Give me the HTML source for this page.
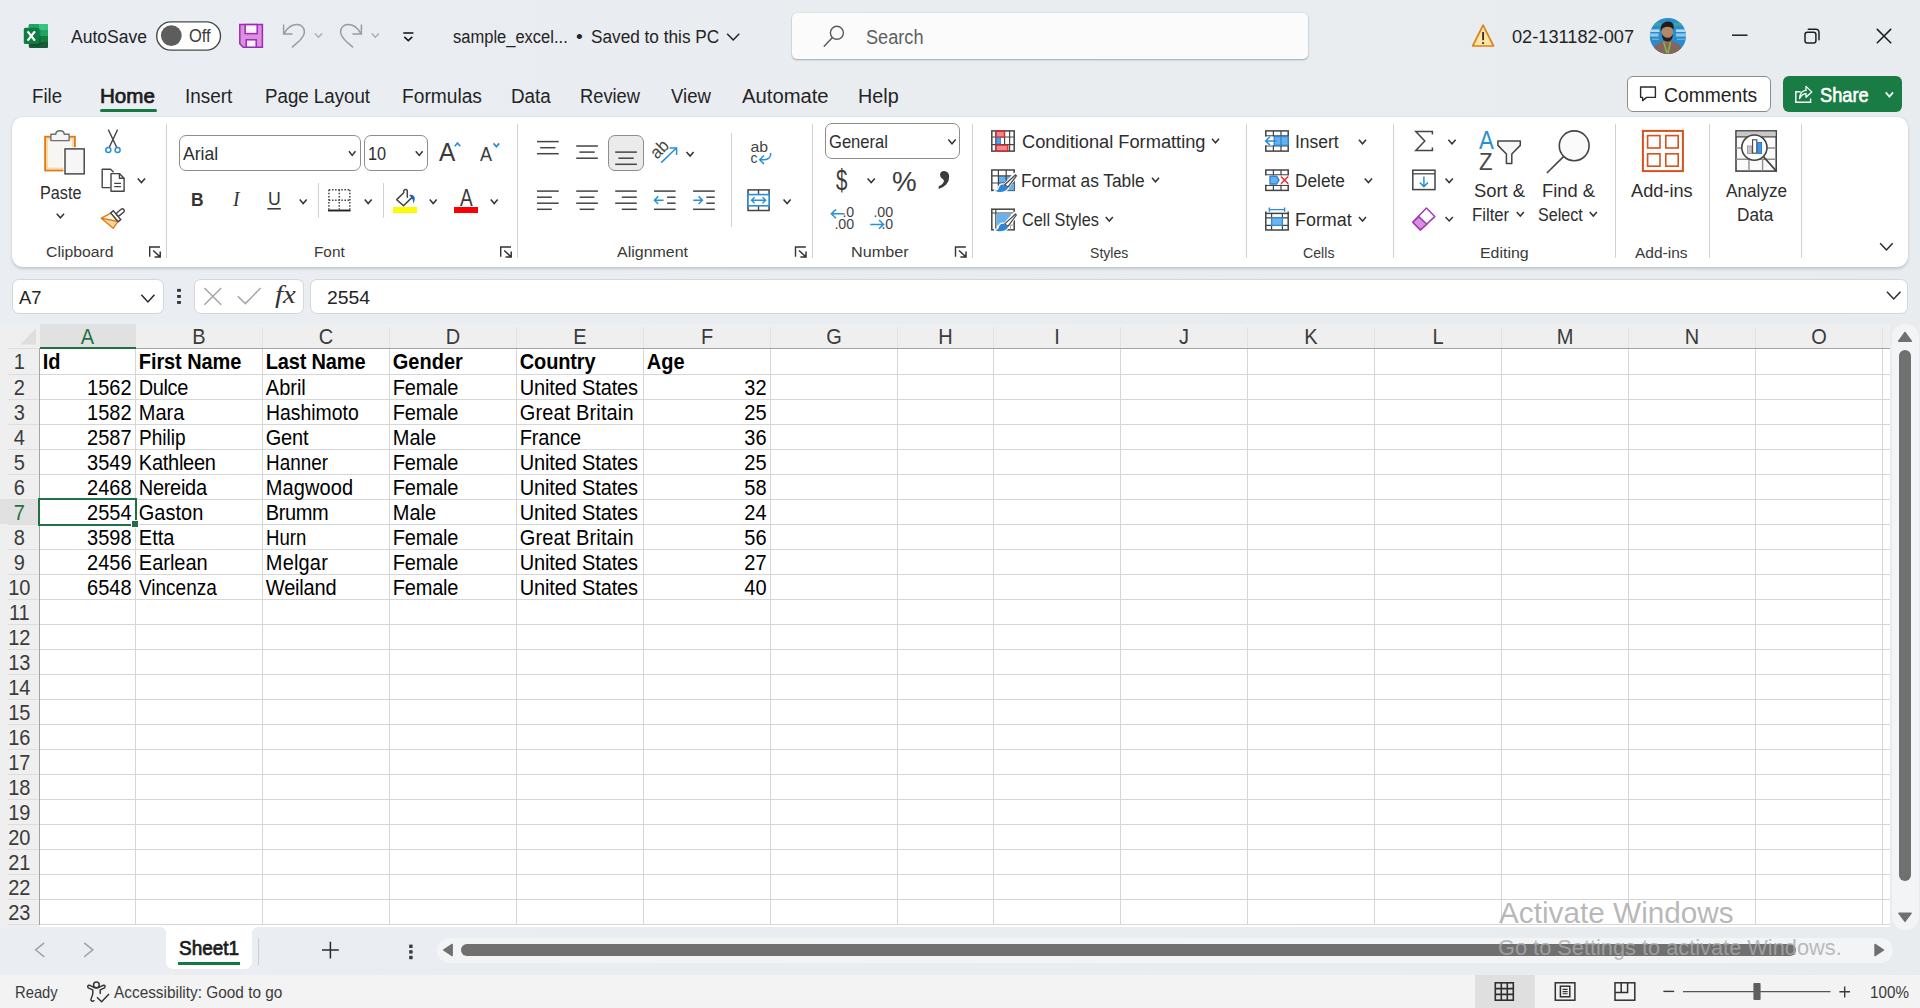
<!DOCTYPE html>
<html lang="en"><head><meta charset="utf-8"><title>sample_excel - Excel</title>
<style>
html,body{margin:0;padding:0;}
body{width:1920px;height:1008px;overflow:hidden;background:linear-gradient(90deg,#eaedf2 0%,#e9edf0 55%,#e8ecef 100%);position:relative;font-family:"Liberation Sans",sans-serif;}
#boxes>div{position:absolute;box-sizing:border-box;}
#icons{position:absolute;left:0;top:0;width:1920px;height:1008px;pointer-events:none;}
.lab>span{position:absolute;white-space:pre;line-height:normal;transform-origin:0 0;}
#grid span{position:absolute;white-space:pre;font-size:20px;line-height:25px;height:25px;color:#000;transform:scaleY(1.085);transform-origin:0 19.5px;}
</style></head>
<body>
<div id="boxes">
<div style="left:792px;top:13px;width:516px;height:46px;background:#fbfbfb;border-radius:5px;box-shadow:0 1px 2px rgba(0,0,0,.28),0 0 0 .5px rgba(0,0,0,.06);"></div>
<div style="left:100px;top:109px;width:57px;height:3.2px;background:#137a43;border-radius:2px;"></div>
<div style="left:1627px;top:76px;width:144px;height:36px;background:#fff;border:1px solid #8c8c8c;border-radius:6px;"></div>
<div style="left:1783px;top:76px;width:119px;height:36px;background:#187c44;border-radius:6px;"></div>
<div style="left:12px;top:117.3px;width:1896px;height:149.7px;background:#fff;border-radius:11px;box-shadow:0 1.5px 3px rgba(0,0,0,.16),0 0 1px rgba(0,0,0,.10);"></div>
<div style="left:165.9px;top:123.7px;width:1px;height:134px;background:#d2d2d2;"></div>
<div style="left:516.9px;top:123.7px;width:1px;height:134px;background:#d2d2d2;"></div>
<div style="left:812.1px;top:123.7px;width:1px;height:134px;background:#d2d2d2;"></div>
<div style="left:972.0px;top:123.7px;width:1px;height:134px;background:#d2d2d2;"></div>
<div style="left:1246.0px;top:123.7px;width:1px;height:134px;background:#d2d2d2;"></div>
<div style="left:1393.0px;top:123.7px;width:1px;height:134px;background:#d2d2d2;"></div>
<div style="left:1615.1px;top:123.7px;width:1px;height:134px;background:#d2d2d2;"></div>
<div style="left:1709.1px;top:123.7px;width:1px;height:134px;background:#d2d2d2;"></div>
<div style="left:1800.8px;top:123.7px;width:1px;height:134px;background:#d2d2d2;"></div>
<div style="left:318px;top:183.3px;width:1px;height:35px;background:#d2d2d2;"></div>
<div style="left:383px;top:183.3px;width:1px;height:35px;background:#d2d2d2;"></div>
<div style="left:730.8px;top:133px;width:1px;height:93.6px;background:#d2d2d2;"></div>
<div style="left:179.2px;top:135.3px;width:181.6px;height:35.3px;background:#fff;border:1px solid #8d8d8d;border-radius:7px;"></div>
<div style="left:364.4px;top:135.3px;width:63.6px;height:35.3px;background:#fff;border:1px solid #8d8d8d;border-radius:7px;"></div>
<div style="left:454px;top:207px;width:24px;height:6px;background:#fb0000;"></div>
<div style="left:393px;top:207px;width:24px;height:6px;background:#fbfb04;"></div>
<div style="left:608.2px;top:135.3px;width:35.6px;height:35.3px;background:#ebebeb;border:1px solid #8d8d8d;border-radius:7px;"></div>
<div style="left:825.2px;top:123.3px;width:135.2px;height:35.3px;background:#fff;border:1px solid #8d8d8d;border-radius:7px;"></div>
<div style="left:12px;top:279px;width:152px;height:35px;background:#fff;border:1px solid #d3d6da;border-radius:7px;"></div>
<div style="left:194px;top:279px;width:110px;height:35px;background:#fff;border:1px solid #d3d6da;border-radius:7px;"></div>
<div style="left:310px;top:279px;width:1598px;height:35px;background:#fff;border:1px solid #d3d6da;border-radius:7px;"></div>
<div id="grid" style="left:0;top:0;width:1920px;height:1008px;"><div style="position:absolute;left:40px;top:349px;width:1849.5px;height:578px;background:#fff;"></div>
<div style="position:absolute;left:39px;top:324px;width:1850.5px;height:24.5px;background:#efefef;"></div>
<div style="position:absolute;left:0px;top:324px;width:40px;height:603px;background:#efefef;border-top-left-radius:6px;"></div>
<div style="position:absolute;left:40px;top:324px;width:95.5px;height:23px;background:#e1e1e1;"></div>
<div style="position:absolute;left:0px;top:499px;width:39px;height:25px;background:#e1e1e1;"></div>
<div style="position:absolute;left:39px;top:348px;width:1px;height:577px;background:#a3a3a3;"></div>
<div style="position:absolute;left:135px;top:349px;width:1px;height:576px;background:#d6d6d6;"></div>
<div style="position:absolute;left:135px;top:327px;width:1px;height:21px;background:#e2e2e2;"></div>
<div style="position:absolute;left:262px;top:349px;width:1px;height:576px;background:#d6d6d6;"></div>
<div style="position:absolute;left:262px;top:327px;width:1px;height:21px;background:#e2e2e2;"></div>
<div style="position:absolute;left:389px;top:349px;width:1px;height:576px;background:#d6d6d6;"></div>
<div style="position:absolute;left:389px;top:327px;width:1px;height:21px;background:#e2e2e2;"></div>
<div style="position:absolute;left:516px;top:349px;width:1px;height:576px;background:#d6d6d6;"></div>
<div style="position:absolute;left:516px;top:327px;width:1px;height:21px;background:#e2e2e2;"></div>
<div style="position:absolute;left:643px;top:349px;width:1px;height:576px;background:#d6d6d6;"></div>
<div style="position:absolute;left:643px;top:327px;width:1px;height:21px;background:#e2e2e2;"></div>
<div style="position:absolute;left:770px;top:349px;width:1px;height:576px;background:#d6d6d6;"></div>
<div style="position:absolute;left:770px;top:327px;width:1px;height:21px;background:#e2e2e2;"></div>
<div style="position:absolute;left:897px;top:349px;width:1px;height:576px;background:#d6d6d6;"></div>
<div style="position:absolute;left:897px;top:327px;width:1px;height:21px;background:#e2e2e2;"></div>
<div style="position:absolute;left:993px;top:349px;width:1px;height:576px;background:#d6d6d6;"></div>
<div style="position:absolute;left:993px;top:327px;width:1px;height:21px;background:#e2e2e2;"></div>
<div style="position:absolute;left:1120px;top:349px;width:1px;height:576px;background:#d6d6d6;"></div>
<div style="position:absolute;left:1120px;top:327px;width:1px;height:21px;background:#e2e2e2;"></div>
<div style="position:absolute;left:1247px;top:349px;width:1px;height:576px;background:#d6d6d6;"></div>
<div style="position:absolute;left:1247px;top:327px;width:1px;height:21px;background:#e2e2e2;"></div>
<div style="position:absolute;left:1374px;top:349px;width:1px;height:576px;background:#d6d6d6;"></div>
<div style="position:absolute;left:1374px;top:327px;width:1px;height:21px;background:#e2e2e2;"></div>
<div style="position:absolute;left:1501px;top:349px;width:1px;height:576px;background:#d6d6d6;"></div>
<div style="position:absolute;left:1501px;top:327px;width:1px;height:21px;background:#e2e2e2;"></div>
<div style="position:absolute;left:1628px;top:349px;width:1px;height:576px;background:#d6d6d6;"></div>
<div style="position:absolute;left:1628px;top:327px;width:1px;height:21px;background:#e2e2e2;"></div>
<div style="position:absolute;left:1755px;top:349px;width:1px;height:576px;background:#d6d6d6;"></div>
<div style="position:absolute;left:1755px;top:327px;width:1px;height:21px;background:#e2e2e2;"></div>
<div style="position:absolute;left:1882px;top:349px;width:1px;height:576px;background:#d6d6d6;"></div>
<div style="position:absolute;left:1882px;top:327px;width:1px;height:21px;background:#e2e2e2;"></div>
<div style="position:absolute;left:8px;top:374px;width:31px;height:1px;background:#dddddd;"></div>
<div style="position:absolute;left:40px;top:374px;width:1849.5px;height:1px;background:#d6d6d6;"></div>
<div style="position:absolute;left:8px;top:399px;width:31px;height:1px;background:#dddddd;"></div>
<div style="position:absolute;left:40px;top:399px;width:1849.5px;height:1px;background:#d6d6d6;"></div>
<div style="position:absolute;left:8px;top:424px;width:31px;height:1px;background:#dddddd;"></div>
<div style="position:absolute;left:40px;top:424px;width:1849.5px;height:1px;background:#d6d6d6;"></div>
<div style="position:absolute;left:8px;top:449px;width:31px;height:1px;background:#dddddd;"></div>
<div style="position:absolute;left:40px;top:449px;width:1849.5px;height:1px;background:#d6d6d6;"></div>
<div style="position:absolute;left:8px;top:474px;width:31px;height:1px;background:#dddddd;"></div>
<div style="position:absolute;left:40px;top:474px;width:1849.5px;height:1px;background:#d6d6d6;"></div>
<div style="position:absolute;left:8px;top:499px;width:31px;height:1px;background:#dddddd;"></div>
<div style="position:absolute;left:40px;top:499px;width:1849.5px;height:1px;background:#d6d6d6;"></div>
<div style="position:absolute;left:8px;top:524px;width:31px;height:1px;background:#dddddd;"></div>
<div style="position:absolute;left:40px;top:524px;width:1849.5px;height:1px;background:#d6d6d6;"></div>
<div style="position:absolute;left:8px;top:549px;width:31px;height:1px;background:#dddddd;"></div>
<div style="position:absolute;left:40px;top:549px;width:1849.5px;height:1px;background:#d6d6d6;"></div>
<div style="position:absolute;left:8px;top:574px;width:31px;height:1px;background:#dddddd;"></div>
<div style="position:absolute;left:40px;top:574px;width:1849.5px;height:1px;background:#d6d6d6;"></div>
<div style="position:absolute;left:8px;top:599px;width:31px;height:1px;background:#dddddd;"></div>
<div style="position:absolute;left:40px;top:599px;width:1849.5px;height:1px;background:#d6d6d6;"></div>
<div style="position:absolute;left:8px;top:624px;width:31px;height:1px;background:#dddddd;"></div>
<div style="position:absolute;left:40px;top:624px;width:1849.5px;height:1px;background:#d6d6d6;"></div>
<div style="position:absolute;left:8px;top:649px;width:31px;height:1px;background:#dddddd;"></div>
<div style="position:absolute;left:40px;top:649px;width:1849.5px;height:1px;background:#d6d6d6;"></div>
<div style="position:absolute;left:8px;top:674px;width:31px;height:1px;background:#dddddd;"></div>
<div style="position:absolute;left:40px;top:674px;width:1849.5px;height:1px;background:#d6d6d6;"></div>
<div style="position:absolute;left:8px;top:699px;width:31px;height:1px;background:#dddddd;"></div>
<div style="position:absolute;left:40px;top:699px;width:1849.5px;height:1px;background:#d6d6d6;"></div>
<div style="position:absolute;left:8px;top:724px;width:31px;height:1px;background:#dddddd;"></div>
<div style="position:absolute;left:40px;top:724px;width:1849.5px;height:1px;background:#d6d6d6;"></div>
<div style="position:absolute;left:8px;top:749px;width:31px;height:1px;background:#dddddd;"></div>
<div style="position:absolute;left:40px;top:749px;width:1849.5px;height:1px;background:#d6d6d6;"></div>
<div style="position:absolute;left:8px;top:774px;width:31px;height:1px;background:#dddddd;"></div>
<div style="position:absolute;left:40px;top:774px;width:1849.5px;height:1px;background:#d6d6d6;"></div>
<div style="position:absolute;left:8px;top:799px;width:31px;height:1px;background:#dddddd;"></div>
<div style="position:absolute;left:40px;top:799px;width:1849.5px;height:1px;background:#d6d6d6;"></div>
<div style="position:absolute;left:8px;top:824px;width:31px;height:1px;background:#dddddd;"></div>
<div style="position:absolute;left:40px;top:824px;width:1849.5px;height:1px;background:#d6d6d6;"></div>
<div style="position:absolute;left:8px;top:849px;width:31px;height:1px;background:#dddddd;"></div>
<div style="position:absolute;left:40px;top:849px;width:1849.5px;height:1px;background:#d6d6d6;"></div>
<div style="position:absolute;left:8px;top:874px;width:31px;height:1px;background:#dddddd;"></div>
<div style="position:absolute;left:40px;top:874px;width:1849.5px;height:1px;background:#d6d6d6;"></div>
<div style="position:absolute;left:8px;top:899px;width:31px;height:1px;background:#dddddd;"></div>
<div style="position:absolute;left:40px;top:899px;width:1849.5px;height:1px;background:#d6d6d6;"></div>
<div style="position:absolute;left:8px;top:924px;width:31px;height:1px;background:#dddddd;"></div>
<div style="position:absolute;left:40px;top:924px;width:1849.5px;height:1px;background:#d6d6d6;"></div>
<div style="position:absolute;left:39px;top:348px;width:1850.5px;height:1px;background:#a3a3a3;"></div>
<div style="position:absolute;left:8px;top:348px;width:31px;height:1px;background:#dddddd;"></div>
<div style="position:absolute;left:39.5px;top:346.8px;width:96px;height:2.2px;background:#1f7145;"></div>
<span style="left:40px;top:325.0px;width:95px;text-align:center;color:#1f7145;line-height:25px;">A</span>
<span style="left:136px;top:325.0px;width:126px;text-align:center;color:#3b3b3b;line-height:25px;">B</span>
<span style="left:263px;top:325.0px;width:126px;text-align:center;color:#3b3b3b;line-height:25px;">C</span>
<span style="left:390px;top:325.0px;width:126px;text-align:center;color:#3b3b3b;line-height:25px;">D</span>
<span style="left:517px;top:325.0px;width:126px;text-align:center;color:#3b3b3b;line-height:25px;">E</span>
<span style="left:644px;top:325.0px;width:126px;text-align:center;color:#3b3b3b;line-height:25px;">F</span>
<span style="left:771px;top:325.0px;width:126px;text-align:center;color:#3b3b3b;line-height:25px;">G</span>
<span style="left:898px;top:325.0px;width:95px;text-align:center;color:#3b3b3b;line-height:25px;">H</span>
<span style="left:994px;top:325.0px;width:126px;text-align:center;color:#3b3b3b;line-height:25px;">I</span>
<span style="left:1121px;top:325.0px;width:126px;text-align:center;color:#3b3b3b;line-height:25px;">J</span>
<span style="left:1248px;top:325.0px;width:126px;text-align:center;color:#3b3b3b;line-height:25px;">K</span>
<span style="left:1375px;top:325.0px;width:126px;text-align:center;color:#3b3b3b;line-height:25px;">L</span>
<span style="left:1502px;top:325.0px;width:126px;text-align:center;color:#3b3b3b;line-height:25px;">M</span>
<span style="left:1629px;top:325.0px;width:126px;text-align:center;color:#3b3b3b;line-height:25px;">N</span>
<span style="left:1756px;top:325.0px;width:126px;text-align:center;color:#3b3b3b;line-height:25px;">O</span>
<span style="left:0;top:349.8px;width:38.6px;text-align:center;color:#3b3b3b;">1</span>
<span style="left:0;top:375.8px;width:38.6px;text-align:center;color:#3b3b3b;">2</span>
<span style="left:0;top:400.8px;width:38.6px;text-align:center;color:#3b3b3b;">3</span>
<span style="left:0;top:425.8px;width:38.6px;text-align:center;color:#3b3b3b;">4</span>
<span style="left:0;top:450.8px;width:38.6px;text-align:center;color:#3b3b3b;">5</span>
<span style="left:0;top:475.8px;width:38.6px;text-align:center;color:#3b3b3b;">6</span>
<span style="left:0;top:500.8px;width:38.6px;text-align:center;color:#1f7145;">7</span>
<span style="left:0;top:525.8px;width:38.6px;text-align:center;color:#3b3b3b;">8</span>
<span style="left:0;top:550.8px;width:38.6px;text-align:center;color:#3b3b3b;">9</span>
<span style="left:0;top:575.8px;width:38.6px;text-align:center;color:#3b3b3b;">10</span>
<span style="left:0;top:600.8px;width:38.6px;text-align:center;color:#3b3b3b;">11</span>
<span style="left:0;top:625.8px;width:38.6px;text-align:center;color:#3b3b3b;">12</span>
<span style="left:0;top:650.8px;width:38.6px;text-align:center;color:#3b3b3b;">13</span>
<span style="left:0;top:675.8px;width:38.6px;text-align:center;color:#3b3b3b;">14</span>
<span style="left:0;top:700.8px;width:38.6px;text-align:center;color:#3b3b3b;">15</span>
<span style="left:0;top:725.8px;width:38.6px;text-align:center;color:#3b3b3b;">16</span>
<span style="left:0;top:750.8px;width:38.6px;text-align:center;color:#3b3b3b;">17</span>
<span style="left:0;top:775.8px;width:38.6px;text-align:center;color:#3b3b3b;">18</span>
<span style="left:0;top:800.8px;width:38.6px;text-align:center;color:#3b3b3b;">19</span>
<span style="left:0;top:825.8px;width:38.6px;text-align:center;color:#3b3b3b;">20</span>
<span style="left:0;top:850.8px;width:38.6px;text-align:center;color:#3b3b3b;">21</span>
<span style="left:0;top:875.8px;width:38.6px;text-align:center;color:#3b3b3b;">22</span>
<span style="left:0;top:900.8px;width:38.6px;text-align:center;color:#3b3b3b;">23</span>
<span style="left:42.8px;top:349.8px;font-weight:700;">Id</span>
<span style="left:138.8px;top:349.8px;font-weight:700;letter-spacing:-0.089px;">First Name</span>
<span style="left:265.8px;top:349.8px;font-weight:700;letter-spacing:-0.175px;">Last Name</span>
<span style="left:392.8px;top:349.8px;font-weight:700;">Gender</span>
<span style="left:519.8px;top:349.8px;font-weight:700;letter-spacing:-0.150px;">Country</span>
<span style="left:646.8px;top:349.8px;font-weight:700;">Age</span>
<span style="left:39px;top:375.8px;width:92.6px;text-align:right;">1562</span>
<span style="left:138.8px;top:375.8px;letter-spacing:-0.400px;">Dulce</span>
<span style="left:265.8px;top:375.8px;">Abril</span>
<span style="left:392.8px;top:375.8px;letter-spacing:-0.220px;">Female</span>
<span style="left:519.8px;top:375.8px;letter-spacing:-0.150px;">United States</span>
<span style="left:643px;top:375.8px;width:123.6px;text-align:right;">32</span>
<span style="left:39px;top:400.8px;width:92.6px;text-align:right;">1582</span>
<span style="left:138.8px;top:400.8px;">Mara</span>
<span style="left:265.8px;top:400.8px;transform:scaleX(0.97) scaleY(1.085);">Hashimoto</span>
<span style="left:392.8px;top:400.8px;letter-spacing:-0.220px;">Female</span>
<span style="left:519.8px;top:400.8px;letter-spacing:0.125px;">Great Britain</span>
<span style="left:643px;top:400.8px;width:123.6px;text-align:right;">25</span>
<span style="left:39px;top:425.8px;width:92.6px;text-align:right;">2587</span>
<span style="left:138.8px;top:425.8px;transform:scaleX(0.954) scaleY(1.085);">Philip</span>
<span style="left:265.8px;top:425.8px;letter-spacing:-0.233px;">Gent</span>
<span style="left:392.8px;top:425.8px;">Male</span>
<span style="left:519.8px;top:425.8px;letter-spacing:-0.160px;">France</span>
<span style="left:643px;top:425.8px;width:123.6px;text-align:right;">36</span>
<span style="left:39px;top:450.8px;width:92.6px;text-align:right;">3549</span>
<span style="left:138.8px;top:450.8px;letter-spacing:-0.257px;">Kathleen</span>
<span style="left:265.8px;top:450.8px;transform:scaleX(0.944) scaleY(1.085);">Hanner</span>
<span style="left:392.8px;top:450.8px;letter-spacing:-0.220px;">Female</span>
<span style="left:519.8px;top:450.8px;letter-spacing:-0.150px;">United States</span>
<span style="left:643px;top:450.8px;width:123.6px;text-align:right;">25</span>
<span style="left:39px;top:475.8px;width:92.6px;text-align:right;">2468</span>
<span style="left:138.8px;top:475.8px;letter-spacing:-0.300px;">Nereida</span>
<span style="left:265.8px;top:475.8px;letter-spacing:0.117px;">Magwood</span>
<span style="left:392.8px;top:475.8px;letter-spacing:-0.220px;">Female</span>
<span style="left:519.8px;top:475.8px;letter-spacing:-0.150px;">United States</span>
<span style="left:643px;top:475.8px;width:123.6px;text-align:right;">58</span>
<span style="left:39px;top:500.8px;width:92.6px;text-align:right;">2554</span>
<span style="left:138.8px;top:500.8px;">Gaston</span>
<span style="left:265.8px;top:500.8px;letter-spacing:-0.400px;">Brumm</span>
<span style="left:392.8px;top:500.8px;">Male</span>
<span style="left:519.8px;top:500.8px;letter-spacing:-0.150px;">United States</span>
<span style="left:643px;top:500.8px;width:123.6px;text-align:right;">24</span>
<span style="left:39px;top:525.8px;width:92.6px;text-align:right;">3598</span>
<span style="left:138.8px;top:525.8px;">Etta</span>
<span style="left:265.8px;top:525.8px;transform:scaleX(0.929) scaleY(1.085);">Hurn</span>
<span style="left:392.8px;top:525.8px;letter-spacing:-0.220px;">Female</span>
<span style="left:519.8px;top:525.8px;letter-spacing:0.125px;">Great Britain</span>
<span style="left:643px;top:525.8px;width:123.6px;text-align:right;">56</span>
<span style="left:39px;top:550.8px;width:92.6px;text-align:right;">2456</span>
<span style="left:138.8px;top:550.8px;">Earlean</span>
<span style="left:265.8px;top:550.8px;letter-spacing:0.180px;">Melgar</span>
<span style="left:392.8px;top:550.8px;letter-spacing:-0.220px;">Female</span>
<span style="left:519.8px;top:550.8px;letter-spacing:-0.150px;">United States</span>
<span style="left:643px;top:550.8px;width:123.6px;text-align:right;">27</span>
<span style="left:39px;top:575.8px;width:92.6px;text-align:right;">6548</span>
<span style="left:138.8px;top:575.8px;transform:scaleX(0.949) scaleY(1.085);">Vincenza</span>
<span style="left:265.8px;top:575.8px;letter-spacing:-0.183px;">Weiland</span>
<span style="left:392.8px;top:575.8px;letter-spacing:-0.220px;">Female</span>
<span style="left:519.8px;top:575.8px;letter-spacing:-0.150px;">United States</span>
<span style="left:643px;top:575.8px;width:123.6px;text-align:right;">40</span>
<div style="position:absolute;left:38.3px;top:498px;width:98.3px;height:28px;border:2px solid #1f7145;box-sizing:border-box;"></div>
<div style="position:absolute;left:131.2px;top:520.4px;width:7.4px;height:7.4px;background:#fff;"></div>
<div style="position:absolute;left:132.2px;top:521.4px;width:5.8px;height:5.6px;background:#1f7145;"></div>
<div style="position:absolute;left:1892px;top:324px;width:26.5px;height:606px;background:#f3f4f5;border-radius:13px;"></div>
<div style="position:absolute;left:1899px;top:350px;width:12.2px;height:531px;background:#707070;border-radius:6.1px;"></div></div>
<div style="left:166.3px;top:925px;width:85.8px;height:44px;background:#fff;border-radius:0 0 7px 7px;"></div>
<div style="left:178px;top:962px;width:62px;height:3px;background:#137a43;"></div>
<div style="left:258px;top:937.5px;width:1px;height:27px;background:#c9cdd2;"></div>
<div style="left:436.5px;top:937.5px;width:1456px;height:25px;background:#f3f4f5;border-radius:12.5px;"></div>
<div style="left:461.3px;top:944.3px;width:1334.3px;height:12px;background:#707070;border-radius:6px;"></div>
<div style="left:0px;top:975px;width:1920px;height:33px;background:#f3f3f3;"></div>
<div style="left:1475px;top:975px;width:60px;height:33px;background:#dfdfdf;"></div>
</div>
<svg id="icons" viewBox="0 0 1920 1008" width="1920" height="1008">
<g>
<rect x="28.8" y="24" width="19.2" height="24" rx="1.6" fill="#185c37"/>
<path d="M28.8,25.6 a1.6,1.6 0 0 1 1.6,-1.6 H38.4 V30 H28.8Z" fill="#21a366"/>
<path d="M38.4,24 H46.4 a1.6,1.6 0 0 1 1.6,1.6 V30 H38.4Z" fill="#33c481"/>
<rect x="28.8" y="30" width="9.6" height="6" fill="#107c41"/>
<rect x="38.4" y="30" width="9.6" height="6" fill="#21a366"/>
<rect x="28.8" y="36" width="9.6" height="6" fill="#185c37"/>
<rect x="38.4" y="36" width="9.6" height="6" fill="#107c41"/>
<path d="M38.4,42 H48 V46.4 a1.6,1.6 0 0 1 -1.6,1.6 H38.4Z" fill="#185c37"/>
<rect x="30" y="29" width="10.5" height="16.5" rx="1.5" fill="#000" opacity=".18"/>
<rect x="23.8" y="27.8" width="15.6" height="16.2" rx="1.6" fill="#107c41"/>
<path d="M27.6,31.4 L34.9,40.6 M34.9,31.4 L27.6,40.6" stroke="#fff" stroke-width="2.3" fill="none"/>
</g>
<rect x="156.7" y="21.9" width="63.8" height="28.2" rx="14.1" fill="#fff" stroke="#4a4a4a" stroke-width="1.4"/>
<circle cx="171.3" cy="35.6" r="10.4" fill="#5d5d5d"/>
<g stroke="#9a2eae" stroke-width="1.5" stroke-linejoin="miter">
<path d="M239.8,24.6 H262.4 V47.2 H243.2 L239.8,43.8Z" fill="#dc8fe2"/>
<rect x="245.2" y="24.6" width="12" height="9" fill="#fcf1fd"/>
<rect x="246.2" y="39.8" width="10" height="7.4" fill="#fcf1fd"/>
</g>
<path d="M283.6,24.4 V33.9 H292.6 M284,33.6 C287.5,27.5 292.5,24.6 297,24.6 C301.6,24.6 304.4,27.9 304.4,31.8 C304.4,35.6 302.2,38 299.2,41 L292,47.4" fill="none" stroke="#9c9c9c" stroke-width="1.5"/>
<g transform="translate(645,0) scale(-1,1)"><path d="M283.6,24.4 V33.9 H292.6 M284,33.6 C287.5,27.5 292.5,24.6 297,24.6 C301.6,24.6 304.4,27.9 304.4,31.8 C304.4,35.6 302.2,38 299.2,41 L292,47.4" fill="none" stroke="#9c9c9c" stroke-width="1.5"/></g>
<polyline points="314.95,33.53 318.50,37.30 322.05,33.53" fill="none" stroke="#adadad" stroke-width="1.4" stroke-linecap="butt" stroke-linejoin="miter"/>
<polyline points="371.75,33.53 375.30,37.30 378.85,33.53" fill="none" stroke="#adadad" stroke-width="1.4" stroke-linecap="butt" stroke-linejoin="miter"/>
<line x1="403.3" y1="33" x2="413.4" y2="33" stroke="#1a1a1a" stroke-width="1.6" stroke-linecap="butt"/>
<polyline points="404.35,36.93 408.30,40.60 412.25,36.93" fill="none" stroke="#1a1a1a" stroke-width="1.6" stroke-linecap="butt" stroke-linejoin="miter"/>
<polyline points="727.15,33.73 733.20,40.00 739.25,33.73" fill="none" stroke="#242424" stroke-width="1.5" stroke-linecap="butt" stroke-linejoin="miter"/>
<circle cx="836.9" cy="32.8" r="6.5" fill="none" stroke="#5a5a5a" stroke-width="1.4"/>
<line x1="832.2" y1="37.7" x2="824.2" y2="46.3" stroke="#5a5a5a" stroke-width="1.4" stroke-linecap="round"/>
<path d="M1483.1,25.2 L1493.5,46 H1472.7Z" fill="#fde6a2" stroke="#e07f1c" stroke-width="1.7" stroke-linejoin="round"/>
<line x1="1483.1" y1="32" x2="1483.1" y2="40.2" stroke="#333" stroke-width="1.9" stroke-linecap="butt"/>
<circle cx="1483.1" cy="43.1" r="1.15" fill="#333"/>
<g><clipPath id="av"><circle cx="1667.9" cy="36" r="18.1"/></clipPath>
<g clip-path="url(#av)">
<rect x="1649" y="17" width="38" height="38" fill="#2a8bcd"/>
<rect x="1652" y="22.6" width="9" height="3.4" fill="#3fae8e" opacity=".75"/>
<rect x="1674" y="22.6" width="10" height="3.4" fill="#3fae8e" opacity=".75"/>
<rect x="1650" y="29.4" width="9.5" height="2.6" fill="#d6edf8" opacity=".8"/>
<rect x="1650" y="33.4" width="8.5" height="3.2" fill="#9fd3ee" opacity=".85"/>
<rect x="1676" y="29.4" width="10" height="2.6" fill="#d6edf8" opacity=".8"/>
<rect x="1676" y="33.4" width="10" height="3.2" fill="#9fd3ee" opacity=".85"/>
<rect x="1652" y="38.6" width="7" height="1.4" fill="#7cc4ea" opacity=".7"/>
<rect x="1677" y="38.6" width="8" height="1.4" fill="#7cc4ea" opacity=".7"/>
<path d="M1651,55 C1652,46.5 1657.5,43 1662.5,41.6 L1672.5,41.6 C1678,43 1682.5,46.5 1684,55Z" fill="#86655f"/>
<path d="M1663.6,42 L1667,53 M1670.6,42 L1668,53" fill="none" stroke="#86b93f" stroke-width="1.5"/>
<path d="M1664.4,38 H1670.6 V43 H1664.4Z" fill="#a77a5e"/>
<ellipse cx="1667.4" cy="32.6" rx="5.7" ry="7.4" fill="#b48768"/>
<path d="M1660.8,31.4 C1660,24.6 1663.6,21.8 1667.8,21.6 C1672.6,21.6 1674.6,25 1673.4,30 C1672.4,27.6 1669.6,26.4 1665.6,27 C1663.4,27.4 1661.8,28.8 1660.8,31.4Z" fill="#211b19"/>
<path d="M1661.8,33.6 C1662,39.8 1664.6,41.8 1667.4,41.8 C1670.4,41.8 1672.6,39.6 1673,34 C1671.6,37 1669.6,37.8 1667.6,37.8 C1665.4,37.8 1663.2,36.8 1661.8,33.6Z" fill="#2a211f"/>
</g></g>
<line x1="1732" y1="35.2" x2="1747.5" y2="35.2" stroke="#1f1f1f" stroke-width="1.5" stroke-linecap="butt"/>
<rect x="1805" y="32.2" width="10.9" height="10.9" rx="2.3" fill="none" stroke="#1f1f1f" stroke-width="1.5"/>
<path d="M1808.3,29.2 H1816 a3,3 0 0 1 3,3 V39.8" fill="none" stroke="#1f1f1f" stroke-width="1.5" stroke-linecap="round"/>
<path d="M1876.8,28.9 L1891.2,43.2 M1891.2,28.9 L1876.8,43.2" fill="none" stroke="#1f1f1f" stroke-width="1.5"/>
<path d="M1640.6,87 H1655.4 V97.4 H1646.6 L1642.6,100.6 V97.4 H1640.6Z" fill="none" stroke="#2a2a2a" stroke-width="1.4" stroke-linejoin="round"/>
<path d="M1800.6,91.8 H1795.8 V102.2 H1810.6 V98.4" fill="none" stroke="#fff" stroke-width="1.4"/>
<path d="M1799.6,98.6 C1799.8,93.4 1802.6,90.6 1806,90.4 V86.4 L1811.8,91.9 L1806,97.3 V93.6 C1803.4,93.6 1801.4,95.2 1799.6,98.6Z" fill="none" stroke="#fff" stroke-width="1.3" stroke-linejoin="round"/>
<polyline points="1885.75,92.33 1889.40,96.60 1893.05,92.33" fill="none" stroke="#fff" stroke-width="1.7" stroke-linecap="butt" stroke-linejoin="miter"/>
<path d="M149.7,256.8 V247.0 H160" fill="none" stroke="#333" stroke-width="1.4"/><path d="M153.2,250.5 L160.2,257.0 M160.2,251.60000000000002 V257.0 H154.6" fill="none" stroke="#333" stroke-width="1.5"/>
<path d="M500.7,256.8 V247.0 H511" fill="none" stroke="#333" stroke-width="1.4"/><path d="M504.2,250.5 L511.2,257.0 M511.2,251.60000000000002 V257.0 H505.6" fill="none" stroke="#333" stroke-width="1.5"/>
<path d="M795.5,256.8 V247.0 H805.8" fill="none" stroke="#333" stroke-width="1.4"/><path d="M799.0,250.5 L806.0,257.0 M806.0,251.60000000000002 V257.0 H800.4" fill="none" stroke="#333" stroke-width="1.5"/>
<path d="M955.5,256.8 V247.0 H965.8" fill="none" stroke="#333" stroke-width="1.4"/><path d="M959.0,250.5 L966.0,257.0 M966.0,251.60000000000002 V257.0 H960.4" fill="none" stroke="#333" stroke-width="1.5"/>
<polyline points="56.75,213.73 60.40,217.80 64.05,213.73" fill="none" stroke="#333" stroke-width="1.5" stroke-linecap="butt" stroke-linejoin="miter"/>
<polyline points="137.75,178.53 141.40,182.60 145.05,178.53" fill="none" stroke="#333" stroke-width="1.5" stroke-linecap="butt" stroke-linejoin="miter"/>
<polyline points="348.95,151.33 352.20,155.40 355.45,151.33" fill="none" stroke="#333" stroke-width="1.5" stroke-linecap="butt" stroke-linejoin="miter"/>
<polyline points="415.75,151.33 419.20,155.40 422.65,151.33" fill="none" stroke="#333" stroke-width="1.5" stroke-linecap="butt" stroke-linejoin="miter"/>
<line x1="267.4" y1="208.8" x2="280.8" y2="208.8" stroke="#333" stroke-width="1.5" stroke-linecap="butt"/>
<polyline points="299.75,199.53 303.20,203.60 306.65,199.53" fill="none" stroke="#333" stroke-width="1.5" stroke-linecap="butt" stroke-linejoin="miter"/>
<polyline points="364.75,199.53 368.20,203.60 371.65,199.53" fill="none" stroke="#333" stroke-width="1.5" stroke-linecap="butt" stroke-linejoin="miter"/>
<polyline points="429.75,199.53 433.20,203.60 436.65,199.53" fill="none" stroke="#333" stroke-width="1.5" stroke-linecap="butt" stroke-linejoin="miter"/>
<polyline points="490.75,199.53 494.20,203.60 497.65,199.53" fill="none" stroke="#333" stroke-width="1.5" stroke-linecap="butt" stroke-linejoin="miter"/>
<polyline points="454.75,146.27 457.50,143.00 460.25,146.27" fill="none" stroke="#2c8fd6" stroke-width="1.7" stroke-linecap="butt" stroke-linejoin="miter"/>
<polyline points="493.55,143.33 496.40,146.60 499.25,143.33" fill="none" stroke="#2c8fd6" stroke-width="1.7" stroke-linecap="butt" stroke-linejoin="miter"/>
<line x1="537" y1="141.6" x2="558.7" y2="141.6" stroke="#444" stroke-width="1.5" stroke-linecap="butt"/>
<line x1="540.2" y1="147.7" x2="555.5" y2="147.7" stroke="#444" stroke-width="1.5" stroke-linecap="butt"/>
<line x1="537" y1="153.7" x2="558.7" y2="153.7" stroke="#444" stroke-width="1.5" stroke-linecap="butt"/>
<line x1="576.2" y1="146" x2="597.9" y2="146" stroke="#444" stroke-width="1.5" stroke-linecap="butt"/>
<line x1="579.4" y1="152.1" x2="594.7" y2="152.1" stroke="#444" stroke-width="1.5" stroke-linecap="butt"/>
<line x1="576.2" y1="158.2" x2="597.9" y2="158.2" stroke="#444" stroke-width="1.5" stroke-linecap="butt"/>
<line x1="615.2" y1="152.1" x2="636.9" y2="152.1" stroke="#444" stroke-width="1.5" stroke-linecap="butt"/>
<line x1="618.4" y1="158.2" x2="633.7" y2="158.2" stroke="#444" stroke-width="1.5" stroke-linecap="butt"/>
<line x1="615.2" y1="164.3" x2="636.9" y2="164.3" stroke="#444" stroke-width="1.5" stroke-linecap="butt"/>
<line x1="537" y1="191.1" x2="558.7" y2="191.1" stroke="#444" stroke-width="1.5" stroke-linecap="butt"/>
<line x1="576.2" y1="191.1" x2="597.9" y2="191.1" stroke="#444" stroke-width="1.5" stroke-linecap="butt"/>
<line x1="615.2" y1="191.1" x2="636.8" y2="191.1" stroke="#444" stroke-width="1.5" stroke-linecap="butt"/>
<line x1="654" y1="191.1" x2="675.6" y2="191.1" stroke="#444" stroke-width="1.5" stroke-linecap="butt"/>
<line x1="693.1" y1="191.1" x2="714.8" y2="191.1" stroke="#444" stroke-width="1.5" stroke-linecap="butt"/>
<line x1="537" y1="197.2" x2="551.8" y2="197.2" stroke="#444" stroke-width="1.5" stroke-linecap="butt"/>
<line x1="579.6" y1="197.2" x2="594.4" y2="197.2" stroke="#444" stroke-width="1.5" stroke-linecap="butt"/>
<line x1="621.8" y1="197.2" x2="636.8" y2="197.2" stroke="#444" stroke-width="1.5" stroke-linecap="butt"/>
<line x1="667.1" y1="197.2" x2="675.6" y2="197.2" stroke="#444" stroke-width="1.5" stroke-linecap="butt"/>
<line x1="706.3" y1="197.2" x2="714.8" y2="197.2" stroke="#444" stroke-width="1.5" stroke-linecap="butt"/>
<line x1="537" y1="203.2" x2="558.7" y2="203.2" stroke="#444" stroke-width="1.5" stroke-linecap="butt"/>
<line x1="576.2" y1="203.2" x2="597.9" y2="203.2" stroke="#444" stroke-width="1.5" stroke-linecap="butt"/>
<line x1="615.2" y1="203.2" x2="636.8" y2="203.2" stroke="#444" stroke-width="1.5" stroke-linecap="butt"/>
<line x1="667.1" y1="203.2" x2="675.6" y2="203.2" stroke="#444" stroke-width="1.5" stroke-linecap="butt"/>
<line x1="706.3" y1="203.2" x2="714.8" y2="203.2" stroke="#444" stroke-width="1.5" stroke-linecap="butt"/>
<line x1="537" y1="209.3" x2="551.8" y2="209.3" stroke="#444" stroke-width="1.5" stroke-linecap="butt"/>
<line x1="579.6" y1="209.3" x2="594.4" y2="209.3" stroke="#444" stroke-width="1.5" stroke-linecap="butt"/>
<line x1="621.8" y1="209.3" x2="636.8" y2="209.3" stroke="#444" stroke-width="1.5" stroke-linecap="butt"/>
<line x1="654" y1="209.3" x2="675.6" y2="209.3" stroke="#444" stroke-width="1.5" stroke-linecap="butt"/>
<line x1="693.1" y1="209.3" x2="714.8" y2="209.3" stroke="#444" stroke-width="1.5" stroke-linecap="butt"/>
<path d="M663.6,200.2 H654.6 M658.2,196.4 L654.4,200.2 L658.2,204" fill="none" stroke="#2c8fd6" stroke-width="1.5"/>
<path d="M693.2,200.2 H702.2 M698.6,196.4 L702.4,200.2 L698.6,204" fill="none" stroke="#2c8fd6" stroke-width="1.5"/>
<polyline points="686.55,151.93 690.10,156.00 693.65,151.93" fill="none" stroke="#333" stroke-width="1.5" stroke-linecap="butt" stroke-linejoin="miter"/>
<polyline points="783.55,199.53 787.10,203.60 790.65,199.53" fill="none" stroke="#333" stroke-width="1.5" stroke-linecap="butt" stroke-linejoin="miter"/>
<polyline points="948.35,139.53 952.00,143.80 955.65,139.53" fill="none" stroke="#333" stroke-width="1.5" stroke-linecap="butt" stroke-linejoin="miter"/>
<polyline points="867.55,178.53 871.20,182.60 874.85,178.53" fill="none" stroke="#333" stroke-width="1.5" stroke-linecap="butt" stroke-linejoin="miter"/>
<polyline points="1211.95,138.73 1215.50,142.80 1219.05,138.73" fill="none" stroke="#333" stroke-width="1.5" stroke-linecap="butt" stroke-linejoin="miter"/>
<polyline points="1151.95,177.73 1155.50,181.80 1159.05,177.73" fill="none" stroke="#333" stroke-width="1.5" stroke-linecap="butt" stroke-linejoin="miter"/>
<polyline points="1105.75,216.93 1109.30,221.00 1112.85,216.93" fill="none" stroke="#333" stroke-width="1.5" stroke-linecap="butt" stroke-linejoin="miter"/>
<polyline points="1358.95,139.73 1362.50,143.80 1366.05,139.73" fill="none" stroke="#333" stroke-width="1.5" stroke-linecap="butt" stroke-linejoin="miter"/>
<polyline points="1364.75,178.53 1368.40,182.60 1372.05,178.53" fill="none" stroke="#333" stroke-width="1.5" stroke-linecap="butt" stroke-linejoin="miter"/>
<polyline points="1358.95,216.93 1362.50,221.00 1366.05,216.93" fill="none" stroke="#333" stroke-width="1.5" stroke-linecap="butt" stroke-linejoin="miter"/>
<polyline points="1448.35,139.73 1452.00,143.80 1455.65,139.73" fill="none" stroke="#333" stroke-width="1.5" stroke-linecap="butt" stroke-linejoin="miter"/>
<polyline points="1445.55,178.53 1449.20,182.60 1452.85,178.53" fill="none" stroke="#333" stroke-width="1.5" stroke-linecap="butt" stroke-linejoin="miter"/>
<polyline points="1445.55,216.93 1449.20,221.00 1452.85,216.93" fill="none" stroke="#333" stroke-width="1.5" stroke-linecap="butt" stroke-linejoin="miter"/>
<polyline points="1516.75,211.93 1520.30,216.00 1523.85,211.93" fill="none" stroke="#333" stroke-width="1.5" stroke-linecap="butt" stroke-linejoin="miter"/>
<polyline points="1589.75,211.93 1593.30,216.00 1596.85,211.93" fill="none" stroke="#333" stroke-width="1.5" stroke-linecap="butt" stroke-linejoin="miter"/>
<polyline points="1880.15,243.33 1886.40,250.00 1892.65,243.33" fill="none" stroke="#2a2a2a" stroke-width="1.5" stroke-linecap="butt" stroke-linejoin="miter"/>
<g>
<rect x="45.2" y="136.8" width="29.6" height="33.6" fill="#f8f6f3" stroke="#e07b12" stroke-width="2"/>
<rect x="47.1" y="138.7" width="25.8" height="29.8" fill="none" stroke="#fbd9a6" stroke-width="1.8"/>
<path d="M50.9,140.6 V134.2 H55.8 C55.8,131.4 57.7,130.7 60,130.7 C62.3,130.7 64.2,131.4 64.2,134.2 H69.1 V140.6Z" fill="#f4f4f4" stroke="#6e6e6e" stroke-width="1.4" stroke-linejoin="round"/>
<rect x="63.4" y="147.3" width="22.4" height="28.2" fill="#fff"/>
<rect x="65" y="148.9" width="19.2" height="25" fill="#f6f6f6" stroke="#3e3e3e" stroke-width="1.4"/>
</g>
<g fill="none">
<path d="M108.3,129.6 L116.8,147.6 M117.6,129.6 L109.1,147.6" stroke="#444" stroke-width="1.3"/>
<circle cx="108.3" cy="149.9" r="2.5" stroke="#2c8fd6" stroke-width="1.5"/>
<circle cx="117.6" cy="149.9" r="2.5" stroke="#2c8fd6" stroke-width="1.5"/>
</g>
<g fill="none" stroke="#444" stroke-width="1.4" stroke-linejoin="round">
<path d="M110.2,187.6 H102.2 V169.2 H110.6 L113.6,172.2"/>
<path d="M111,173.6 H119.4 L124.1,178.3 V191.2 H111Z" fill="#fff"/>
<path d="M119.4,173.6 V178.3 H124.1"/>
<path d="M114.2,183.4 H121 M114.2,186.6 H121" stroke-width="1.2"/>
</g>
<g transform="translate(114.6,217.2) rotate(-40)">
<path d="M-0.2,-5.4 L-10.8,-7.8 L-0.2,5.4Z" fill="#fff8ee"/>
<path d="M-10.8,-7.8 L-8.2,7.6 L-0.2,5.4Z" fill="#fcd7a4"/>
<path d="M-0.2,-5.4 L-10.8,-7.8 L-8.2,7.6 L-0.2,5.4Z M-10.8,-7.8 L-0.2,5.4" fill="none" stroke="#e07b12" stroke-width="1.4" stroke-linejoin="round"/>
<rect x="-0.2" y="-5.8" width="3.4" height="11.6" fill="#fff" stroke="#444" stroke-width="1.4"/>
<rect x="3.2" y="-1.9" width="8.8" height="3.8" rx="1.9" fill="#fff" stroke="#444" stroke-width="1.4"/>
</g>
<g fill="none" stroke="#444">
<path d="M328.9,189.7 H349.8 M328.9,200.2 H349.8 M328.9,189.7 V209.4 M339.3,189.7 V209.4 M349.8,189.7 V209.4" stroke-width="1.5" stroke-dasharray="1.5 1.6"/>
<path d="M328,210.5 H350.6" stroke-width="1.9" stroke="#222"/>
</g>
<g stroke-linejoin="round" stroke-linecap="round">
<path d="M407.3,197.2 V191.3 a1.8,1.8 0 0 0 -3.6,0 V192.8 L396.7,199.6 L403.5,205.7 L411.8,197.6" fill="none" stroke="#444" stroke-width="1.5"/>
<path d="M409.2,195.2 C411.4,194 414,195 414.6,197.6 C415,199.6 414.4,201.8 413.3,203.8 C413.4,200.6 412.4,198 409.2,195.2Z" fill="#1766b6"/>
</g>
<g>
<text transform="translate(657,159.7) rotate(-45)" font-family="Liberation Sans, sans-serif" font-size="17.5" fill="#444" textLength="18.6" lengthAdjust="spacingAndGlyphs">ab</text>
<path d="M661.2,162.6 L676.4,148 M669.6,147.9 H676.6 V154.9" fill="none" stroke="#2c8fd6" stroke-width="1.5"/>
</g>
<g>
<text x="750.4" y="151.9" font-family="Liberation Sans, sans-serif" font-size="15" fill="#444" textLength="17.6" lengthAdjust="spacingAndGlyphs">ab</text>
<text x="750.4" y="163.2" font-family="Liberation Sans, sans-serif" font-size="15" fill="#444" textLength="7" lengthAdjust="spacingAndGlyphs">c</text>
<path d="M770.7,153 C770.9,157.4 768.2,159.7 764.4,159.7 H759.9 M763.9,155.5 L759.7,159.7 L763.9,163.9" fill="none" stroke="#2c8fd6" stroke-width="1.5"/>
</g>
<g fill="none">
<rect x="748" y="189.9" width="21.1" height="20.6" stroke="#444" stroke-width="1.5" fill="#fff"/>
<path d="M758.5,189.9 V194.6 M758.5,205.8 V210.5" stroke="#444" stroke-width="1.4"/>
<rect x="748" y="194.6" width="21.1" height="11.2" stroke="#2c8fd6" stroke-width="1.6" fill="#fff"/>
<path d="M751.6,200.2 H765.6 M754.6,197.2 L751.5,200.2 L754.6,203.2 M762.6,197.2 L765.7,200.2 L762.6,203.2" stroke="#2c8fd6" stroke-width="1.4"/>
</g>
<text x="842.4" y="216.9" font-family="Liberation Sans, sans-serif" font-size="14.5" fill="#444" textLength="11.8" lengthAdjust="spacingAndGlyphs">.0</text>
<text x="834.4" y="229.2" font-family="Liberation Sans, sans-serif" font-size="14.5" fill="#444" textLength="19.8" lengthAdjust="spacingAndGlyphs">.00</text>
<path d="M844.6,213.8 H831.6 M836,209.4 L831.4,213.8 L836,218.2" fill="none" stroke="#2c8fd6" stroke-width="1.5"/>
<text x="873.4" y="216.9" font-family="Liberation Sans, sans-serif" font-size="14.5" fill="#444" textLength="19.8" lengthAdjust="spacingAndGlyphs">.00</text>
<text x="881.4" y="229.2" font-family="Liberation Sans, sans-serif" font-size="14.5" fill="#444" textLength="11.8" lengthAdjust="spacingAndGlyphs">.0</text>
<path d="M870.2,224.4 H883.4 M879,220 L883.6,224.4 L879,228.8" fill="none" stroke="#2c8fd6" stroke-width="1.5"/>
<g>
<rect x="991.8" y="130.9" width="22.4" height="20.2" fill="#fff" stroke="#444" stroke-width="1.5"/>
<path d="M995.8,130.9 V151.1 M1004.6,130.9 V151.1 M1009.6,130.9 V151.1 M991.8,137 H1014.2 M991.8,144.6 H1014.2" stroke="#444" stroke-width="1.2" fill="none"/>
<rect x="996.2" y="131.4" width="8.2" height="5.6" fill="#f7858c" stroke="#e02a2a" stroke-width="1.3"/>
<rect x="996.4" y="137.8" width="4.2" height="6.2" fill="#4f9fe2" stroke="#2c7fd0" stroke-width=".8"/>
<rect x="996.2" y="145.2" width="11.6" height="5.6" fill="#f7858c" stroke="#e02a2a" stroke-width="1.3"/>
</g>
<g>
<rect x="991.8" y="170" width="22.4" height="20.4" fill="#fff" stroke="#444" stroke-width="1.5"/>
<rect x="998.6" y="176" width="15.6" height="14.4" fill="#69b0ec"/>
<path d="M998.4,170 V190.4 M1006.2,170 V190.4 M991.8,175.8 H1014.2 M991.8,183 H1014.2" stroke="#444" stroke-width="1.2" fill="none"/>
</g>
<g transform="translate(991,169.4)">
<path d="M24.4,6.2 L14.6,17.2" stroke="#fff" stroke-width="6" fill="none" stroke-linecap="round"/>
<path d="M12.8,15.2 C9.6,14.6 8.2,16.8 7.8,18.8 C7.4,20.4 6.2,21.2 4,21.4 C8,23.8 14.8,23 17.2,18.4Z" fill="#fff" stroke="#fff" stroke-width="2.4" stroke-linejoin="round"/>
<path d="M24.6,5.4 L25.4,6.4 L16.9,17.8 L13.7,15.3Z" fill="#fff" stroke="#444" stroke-width="1.2" stroke-linejoin="round"/>
<path d="M12.8,15.2 C9.6,14.6 8.2,16.8 7.8,18.8 C7.4,20.4 6.2,21.2 4,21.4 C8,23.8 14.8,23 17.2,18.4Z" fill="#2f86d2"/>
</g>
<g>
<rect x="991.8" y="209.2" width="22.4" height="20.6" fill="#fff" stroke="#444" stroke-width="1.5"/>
<path d="M995.8,209.2 V229.8 M991.8,213 H1014.2" stroke="#444" stroke-width="1.2" fill="none"/>
<rect x="996.6" y="213.6" width="13.6" height="11.2" fill="#69b0ec"/>
<path d="M1010.4,213 V229.8 M995.8,225 H1014.2" stroke="#9a9a9a" stroke-width="1" fill="none"/>
</g>
<g transform="translate(991,208.6)">
<path d="M24.4,6.2 L14.6,17.2" stroke="#fff" stroke-width="6" fill="none" stroke-linecap="round"/>
<path d="M12.8,15.2 C9.6,14.6 8.2,16.8 7.8,18.8 C7.4,20.4 6.2,21.2 4,21.4 C8,23.8 14.8,23 17.2,18.4Z" fill="#fff" stroke="#fff" stroke-width="2.4" stroke-linejoin="round"/>
<path d="M24.6,5.4 L25.4,6.4 L16.9,17.8 L13.7,15.3Z" fill="#fff" stroke="#444" stroke-width="1.2" stroke-linejoin="round"/>
<path d="M12.8,15.2 C9.6,14.6 8.2,16.8 7.8,18.8 C7.4,20.4 6.2,21.2 4,21.4 C8,23.8 14.8,23 17.2,18.4Z" fill="#2f86d2"/>
</g>
<g>
<rect x="1265.8" y="130.9" width="22.4" height="20.2" fill="#fff" stroke="#444" stroke-width="1.5"/>
<path d="M1273.4,130.9 V151.1 M1281,130.9 V151.1 M1265.8,135.8 H1288.2 M1265.8,146 H1288.2" stroke="#444" stroke-width="1.2" fill="none"/>
<rect x="1264.6" y="136.6" width="9.4" height="8.6" fill="#fff"/>
<rect x="1274.2" y="136.5" width="14" height="8.8" fill="#69b0ec" stroke="#2c86d4" stroke-width="1.3"/>
<path d="M1281,136.5 V145.3" stroke="#2c86d4" stroke-width="1.3"/>
<path d="M1276.6,140.9 H1265.8 M1270,136.7 L1265.6,140.9 L1270,145.1" fill="none" stroke="#2c8fd6" stroke-width="1.5"/>
</g>
<g>
<rect x="1265.8" y="170" width="22.4" height="20.4" fill="#fff" stroke="#444" stroke-width="1.5"/>
<path d="M1273.4,170 V190.4 M1281,170 V190.4 M1265.8,174.8 H1288.2 M1265.8,185.4 H1288.2" stroke="#444" stroke-width="1.2" fill="none"/>
<rect x="1264.8" y="175.5" width="24.6" height="9.2" fill="#fff"/>
<path d="M1270,176.2 H1276.6 L1279,180.1 L1276.6,184 H1270Z" fill="#69b0ec" stroke="#2c86d4" stroke-width="1.4" stroke-linejoin="round"/>
<path d="M1281,176.4 L1288.2,183.8 M1288.2,176.4 L1281,183.8" stroke="#e8312f" stroke-width="1.5" fill="none"/>
</g>
<g>
<path d="M1269.4,207.4 V211.8 M1284.6,207.4 V211.8 M1269.4,209.6 H1284.6" stroke="#2c8fd6" stroke-width="1.4" fill="none"/>
<rect x="1265.8" y="213.4" width="22.4" height="16.6" fill="#fff" stroke="#444" stroke-width="1.5"/>
<path d="M1265.8,213.4 V211.4 M1288.2,213.4 V211.4" stroke="#444" stroke-width="1.5"/>
<path d="M1271.6,213.4 V230 M1282.4,213.4 V230 M1265.8,217.8 H1288.2 M1265.8,225.4 H1288.2" stroke="#444" stroke-width="1.2" fill="none"/>
<rect x="1271.6" y="217.8" width="10.8" height="7.6" fill="#6db3ee" stroke="#2c8fd6" stroke-width="1.3"/>
</g>
<path d="M1432.4,134.6 V131.5 H1415.8 L1424.8,141 L1415.8,150.5 H1432.4 V147.4" fill="none" stroke="#444" stroke-width="1.5"/>
<g fill="none">
<rect x="1412.8" y="170.2" width="22.2" height="19.4" stroke="#444" stroke-width="1.5" fill="#fff"/>
<path d="M1412.8,173.8 H1435" stroke="#444" stroke-width="1.3"/>
<path d="M1423.9,176.6 V186.4 M1419.8,182.4 L1423.9,186.6 L1428,182.4" stroke="#2c8fd6" stroke-width="1.5"/>
</g>
<g stroke-linejoin="round">
<path d="M1426.4,208 L1434.8,216.6 L1420.4,229.9 L1412.8,222.2Z" fill="#fff" stroke="#a23bb3" stroke-width="1.5"/>
<path d="M1418.8,216.6 L1426.8,224.2 L1420.4,229.9 L1412.8,222.2Z" fill="#da8fe1" stroke="#a23bb3" stroke-width="1.5"/>
</g>
<path d="M1497.9,141 H1520.3 V145.4 L1511.8,154 V163.6 H1506.4 V154 L1497.9,145.4Z" fill="#f7f7f7" stroke="#444" stroke-width="1.5" stroke-linejoin="round"/>
<circle cx="1574.2" cy="145.8" r="14.9" fill="#fafafa" stroke="#444" stroke-width="1.6"/>
<line x1="1563.5" y1="156.6" x2="1546.9" y2="173" stroke="#444" stroke-width="1.6" stroke-linecap="butt"/>
<g fill="none" stroke="#d5521d">
<rect x="1642.9" y="130.9" width="40" height="40.2" stroke-width="2"/>
<rect x="1647.6" y="135.6" width="12.4" height="12.4" stroke-width="1.6"/>
<rect x="1665.8" y="135.6" width="12.4" height="12.4" stroke-width="1.6"/>
<rect x="1647.6" y="153.8" width="12.4" height="12.4" stroke-width="1.6"/>
<rect x="1665.8" y="153.8" width="12.4" height="12.4" stroke-width="1.6"/>
</g>
<g>
<rect x="1736" y="130.9" width="40.2" height="40.2" fill="#fafafa" stroke="#444" stroke-width="1.6"/>
<rect x="1736.8" y="131.7" width="38.6" height="4.6" fill="#c8c8c8"/>
<path d="M1736,136.9 H1776.2" stroke="#444" stroke-width="1.3"/>
<path d="M1736,148 H1776.2 M1736,159.2 H1776.2 M1749,159.2 V171 M1762.6,159.2 V171" stroke="#8f8f8f" stroke-width="1.4" fill="none"/>
<circle cx="1754.4" cy="147.6" r="12.6" fill="#fff" stroke="#444" stroke-width="1.6"/>
<path d="M1763.4,156.6 L1776.6,171.4" stroke="#444" stroke-width="1.7"/>
<rect x="1747.5" y="146" width="4.3" height="7.4" fill="#c6c9c6" stroke="#8d8d8d" stroke-width=".8"/>
<rect x="1752.6" y="139.8" width="4.2" height="13.4" fill="#fff" stroke="#444" stroke-width="1.1"/>
<rect x="1757.6" y="142.4" width="4" height="11" fill="#3d97e8" stroke="#1f72c4" stroke-width=".9"/>
</g>
<polyline points="141.35,294.73 147.90,302.00 154.45,294.73" fill="none" stroke="#2a2a2a" stroke-width="1.5" stroke-linecap="butt" stroke-linejoin="miter"/>
<rect x="177.1" y="288.9" width="3.8" height="2.9" fill="#333"/>
<rect x="177.1" y="295" width="3.8" height="2.9" fill="#333"/>
<rect x="177.1" y="301" width="3.8" height="2.9" fill="#333"/>
<path d="M204.4,288 L221.2,304.8 M221.2,288 L204.4,304.8" stroke="#a6a6a6" stroke-width="1.5" fill="none"/>
<path d="M237.8,296.2 L245.4,303.6 L260.6,288" stroke="#a6a6a6" stroke-width="1.5" fill="none"/>
<polyline points="1886.95,291.73 1893.70,299.00 1900.45,291.73" fill="none" stroke="#2a2a2a" stroke-width="1.5" stroke-linecap="butt" stroke-linejoin="miter"/>
<path d="M20.2,344.6 H36 V328.2Z" fill="#dedede"/>
<path d="M1898.6,341.2 L1905,332.4 L1911.4,341.2Z" fill="#707070" stroke="#707070" stroke-width="1.4" stroke-linejoin="round"/>
<path d="M1898.8,913.2 L1905,921.4 L1911.2,913.2Z" fill="#707070" stroke="#707070" stroke-width="1.4" stroke-linejoin="round"/>
<path d="M160.3,927 H166.3 V933 A6,6 0 0 0 160.3,927Z" fill="#fff"/>
<path d="M258.1,927 H252.1 V933 A6,6 0 0 1 258.1,927Z" fill="#fff"/>
<polyline points="44.2,942.8 35.6,949.8 44.2,956.8" fill="none" stroke="#a3a3a3" stroke-width="1.5"/>
<polyline points="84.2,942.8 92.8,949.8 84.2,956.8" fill="none" stroke="#a3a3a3" stroke-width="1.5"/>
<path d="M322,950 H338.8 M330.4,941.8 V958.4" stroke="#2a2a2a" stroke-width="1.5" fill="none"/>
<rect x="409.2" y="944.6" width="3.4" height="3.4" fill="#3a3a3a"/>
<rect x="409.2" y="950.2" width="3.4" height="3.4" fill="#3a3a3a"/>
<rect x="409.2" y="955.8" width="3.4" height="3.4" fill="#3a3a3a"/>
<path d="M452.2,944.4 L443.6,950 L452.2,955.6Z" fill="#707070" stroke="#707070" stroke-width="1.4" stroke-linejoin="round"/>
<path d="M1875,944.4 L1883.6,950 L1875,955.6Z" fill="#707070" stroke="#707070" stroke-width="1.4" stroke-linejoin="round"/>
<g fill="none" stroke="#333" stroke-width="1.45" stroke-linecap="round" stroke-linejoin="round">
<circle cx="96.4" cy="984.9" r="2.85"/>
<path d="M93.4,987.1 C91.2,986.2 89.8,985 88.7,985.3 C87.3,985.8 87.4,987.6 88.8,988.2 L92.8,989.9 V993 C92.8,996 91.2,997.8 90.9,999.4 C90.7,1001 92.4,1001.7 94,1000.7"/>
<path d="M99.4,987.1 C101.6,986.2 103,985 104.1,985.3 C105.5,985.8 105.4,987.6 104,988.2 L100.2,989.9 V993.6"/>
<path d="M93.4,987.1 C95,988 97.8,988 99.4,987.1"/>
<path d="M97,997.3 L101.6,1001.7 L109,994.1" stroke-width="1.5" stroke-linecap="butt"/>
</g>
<g fill="none" stroke="#2f2f2f" stroke-width="1.6">
<rect x="1495.3" y="982.8" width="18" height="17.4"/>
<path d="M1501.3,982.8 V1000.2 M1507.3,982.8 V1000.2 M1495.3,988.6 H1513.3 M1495.3,994.4 H1513.3"/>
</g>
<g fill="none" stroke="#2f2f2f" stroke-width="1.5">
<rect x="1555.3" y="982.8" width="19.6" height="17.4"/>
<rect x="1560.4" y="986.2" width="9.4" height="10.6"/>
<path d="M1562.6,989.4 H1567.6 M1562.6,991.6 H1567.6 M1562.6,993.8 H1567.6" stroke-width="1.1"/>
</g>
<g fill="none" stroke="#2f2f2f" stroke-width="1.5">
<rect x="1615" y="982.8" width="19.8" height="17.4"/>
<path d="M1615,992.4 H1627.6 V982.8 M1621.2,982.8 V992.4"/>
</g>
<line x1="1663.4" y1="991.4" x2="1674.2" y2="991.4" stroke="#3a3a3a" stroke-width="1.4" stroke-linecap="butt"/>
<line x1="1683" y1="991.6" x2="1830.5" y2="991.6" stroke="#555" stroke-width="1.3" stroke-linecap="butt"/>
<rect x="1753.4" y="983" width="7.2" height="17" rx="1" fill="#5f5f5f"/>
<path d="M1839.4,991.8 H1850 M1844.7,986.4 V997.4" stroke="#3a3a3a" stroke-width="1.4" fill="none"/>
</svg>
<div class="lab">
<span style="left:71.20px;top:26.80px;color:#242424;font-family:'Liberation Sans',sans-serif;font-size:18px;font-weight:400;font-style:normal;transform:scaleX(0.9738);">AutoSave</span>
<span style="left:189.40px;top:26.30px;color:#3a3a3a;font-family:'Liberation Sans',sans-serif;font-size:17.5px;font-weight:400;font-style:normal;transform:scaleX(0.9414);">Off</span>
<span style="left:452.50px;top:27.00px;color:#242424;font-family:'Liberation Sans',sans-serif;font-size:18px;font-weight:400;font-style:normal;transform:scaleX(0.9173);">sample_excel...</span>
<span style="left:576.40px;top:27.00px;color:#242424;font-family:'Liberation Sans',sans-serif;font-size:18px;font-weight:400;font-style:normal;transform:scaleX(1.0667);">•</span>
<span style="left:590.50px;top:27.00px;color:#242424;font-family:'Liberation Sans',sans-serif;font-size:18px;font-weight:400;font-style:normal;transform:scaleX(0.9562);">Saved to this PC</span>
<span style="left:865.60px;top:25.70px;color:#5f5f5f;font-family:'Liberation Sans',sans-serif;font-size:19.5px;font-weight:400;font-style:normal;transform:scaleX(0.9304);">Search</span>
<span style="left:1512.30px;top:26.80px;color:#242424;font-family:'Liberation Sans',sans-serif;font-size:18px;font-weight:400;font-style:normal;transform:scaleX(1.0111);">02-131182-007</span>
<span style="left:32.07px;top:84.80px;color:#242424;font-family:'Liberation Sans',sans-serif;font-size:20px;font-weight:400;font-style:normal;transform:scaleX(0.9324);">File</span>
<span style="left:100.13px;top:84.80px;color:#1b1b1b;font-family:'Liberation Sans',sans-serif;font-size:20px;font-weight:400;font-style:normal;transform:scaleX(1.0297);-webkit-text-stroke:0.7px #1b1b1b;">Home</span>
<span style="left:184.86px;top:84.80px;color:#242424;font-family:'Liberation Sans',sans-serif;font-size:20px;font-weight:400;font-style:normal;transform:scaleX(0.9441);">Insert</span>
<span style="left:264.86px;top:84.80px;color:#242424;font-family:'Liberation Sans',sans-serif;font-size:20px;font-weight:400;font-style:normal;transform:scaleX(0.9351);">Page Layout</span>
<span style="left:402.04px;top:84.80px;color:#242424;font-family:'Liberation Sans',sans-serif;font-size:20px;font-weight:400;font-style:normal;transform:scaleX(0.9593);">Formulas</span>
<span style="left:511.06px;top:84.80px;color:#242424;font-family:'Liberation Sans',sans-serif;font-size:20px;font-weight:400;font-style:normal;transform:scaleX(0.9425);">Data</span>
<span style="left:579.68px;top:84.80px;color:#242424;font-family:'Liberation Sans',sans-serif;font-size:20px;font-weight:400;font-style:normal;transform:scaleX(0.9151);">Review</span>
<span style="left:670.60px;top:84.80px;color:#242424;font-family:'Liberation Sans',sans-serif;font-size:20px;font-weight:400;font-style:normal;transform:scaleX(0.9278);">View</span>
<span style="left:741.50px;top:84.80px;color:#242424;font-family:'Liberation Sans',sans-serif;font-size:20px;font-weight:400;font-style:normal;transform:scaleX(1.0119);">Automate</span>
<span style="left:858.01px;top:84.80px;color:#242424;font-family:'Liberation Sans',sans-serif;font-size:20px;font-weight:400;font-style:normal;transform:scaleX(0.9873);">Help</span>
<span style="left:1663.60px;top:83.50px;color:#242424;font-family:'Liberation Sans',sans-serif;font-size:19.5px;font-weight:400;font-style:normal;transform:scaleX(0.9881);">Comments</span>
<span style="left:1819.88px;top:83.50px;color:#fff;font-family:'Liberation Sans',sans-serif;font-size:19.5px;font-weight:400;font-style:normal;transform:scaleX(0.9345);-webkit-text-stroke:0.6px #fff;">Share</span>
<span style="left:46.40px;top:243.20px;color:#3a3a3a;font-family:'Liberation Sans',sans-serif;font-size:15.3px;font-weight:400;font-style:normal;transform:scaleX(1.0313);">Clipboard</span>
<span style="left:313.80px;top:243.20px;color:#3a3a3a;font-family:'Liberation Sans',sans-serif;font-size:15.3px;font-weight:400;font-style:normal;transform:scaleX(1.0014);">Font</span>
<span style="left:617.00px;top:243.20px;color:#3a3a3a;font-family:'Liberation Sans',sans-serif;font-size:15.3px;font-weight:400;font-style:normal;transform:scaleX(1.0440);">Alignment</span>
<span style="left:850.74px;top:243.20px;color:#3a3a3a;font-family:'Liberation Sans',sans-serif;font-size:15.3px;font-weight:400;font-style:normal;transform:scaleX(1.0598);">Number</span>
<span style="left:1089.50px;top:244.20px;color:#3a3a3a;font-family:'Liberation Sans',sans-serif;font-size:15.3px;font-weight:400;font-style:normal;transform:scaleX(0.9213);">Styles</span>
<span style="left:1303.40px;top:244.20px;color:#3a3a3a;font-family:'Liberation Sans',sans-serif;font-size:15.3px;font-weight:400;font-style:normal;transform:scaleX(0.9257);">Cells</span>
<span style="left:1479.56px;top:244.20px;color:#3a3a3a;font-family:'Liberation Sans',sans-serif;font-size:15.3px;font-weight:400;font-style:normal;transform:scaleX(1.0405);">Editing</span>
<span style="left:1635.40px;top:244.20px;color:#3a3a3a;font-family:'Liberation Sans',sans-serif;font-size:15.3px;font-weight:400;font-style:normal;transform:scaleX(1.0131);">Add-ins</span>
<span style="left:40.17px;top:182.80px;color:#2e2e2e;font-family:'Liberation Sans',sans-serif;font-size:17.5px;font-weight:400;font-style:normal;transform:scaleX(0.9252);">Paste</span>
<span style="left:182.70px;top:143.10px;color:#2e2e2e;font-family:'Liberation Sans',sans-serif;font-size:18.5px;font-weight:400;font-style:normal;transform:scaleX(0.9499);">Arial</span>
<span style="left:368.12px;top:143.10px;color:#2e2e2e;font-family:'Liberation Sans',sans-serif;font-size:18.5px;font-weight:400;font-style:normal;transform:scaleX(0.8813);">10</span>
<span style="left:190.56px;top:188.70px;color:#333;font-family:'Liberation Sans',sans-serif;font-size:18.5px;font-weight:700;font-style:normal;transform:scaleX(0.9417);">B</span>
<span style="left:232.58px;top:187.70px;color:#333;font-family:'Liberation Serif',serif;font-size:20px;font-weight:400;font-style:italic;transform:scaleX(0.9778);">I</span>
<span style="left:267.92px;top:189.20px;color:#333;font-family:'Liberation Sans',sans-serif;font-size:18px;font-weight:400;font-style:normal;transform:scaleX(0.9818);">U</span>
<span style="left:438.60px;top:136.60px;color:#3b3b3b;font-family:'Liberation Sans',sans-serif;font-size:26.5px;font-weight:400;font-style:normal;transform:scaleX(0.9222);">A</span>
<span style="left:480.20px;top:142.60px;color:#3b3b3b;font-family:'Liberation Sans',sans-serif;font-size:20px;font-weight:400;font-style:normal;transform:scaleX(0.9000);">A</span>
<span style="left:459.80px;top:184.50px;color:#3b3b3b;font-family:'Liberation Sans',sans-serif;font-size:23.5px;font-weight:400;font-style:normal;transform:scaleX(0.8125);">A</span>
<span style="left:828.60px;top:130.80px;color:#2e2e2e;font-family:'Liberation Sans',sans-serif;font-size:18.5px;font-weight:400;font-style:normal;transform:scaleX(0.8964);">General</span>
<span style="left:836.20px;top:163.00px;color:#3b3b3b;font-family:'Liberation Sans',sans-serif;font-size:30px;font-weight:400;font-style:normal;transform:scaleX(0.6824);">$</span>
<span style="left:891.61px;top:165.60px;color:#3b3b3b;font-family:'Liberation Sans',sans-serif;font-size:28px;font-weight:400;font-style:normal;transform:scaleX(0.9913);">%</span>
<span style="left:938.00px;top:126.20px;color:#3b3b3b;font-family:'Liberation Serif',serif;font-size:59px;font-weight:700;font-style:normal;transform:scaleX(0.8923);">,</span>
<span style="left:1021.50px;top:132.00px;color:#2e2e2e;font-family:'Liberation Sans',sans-serif;font-size:18px;font-weight:400;font-style:normal;transform:scaleX(1.0134);">Conditional Formatting</span>
<span style="left:1020.84px;top:170.90px;color:#2e2e2e;font-family:'Liberation Sans',sans-serif;font-size:18px;font-weight:400;font-style:normal;transform:scaleX(0.9606);">Format as Table</span>
<span style="left:1021.50px;top:209.90px;color:#2e2e2e;font-family:'Liberation Sans',sans-serif;font-size:18px;font-weight:400;font-style:normal;transform:scaleX(0.9044);">Cell Styles</span>
<span style="left:1295.03px;top:132.00px;color:#2e2e2e;font-family:'Liberation Sans',sans-serif;font-size:18px;font-weight:400;font-style:normal;transform:scaleX(0.9701);">Insert</span>
<span style="left:1295.04px;top:170.90px;color:#2e2e2e;font-family:'Liberation Sans',sans-serif;font-size:18px;font-weight:400;font-style:normal;transform:scaleX(0.9584);">Delete</span>
<span style="left:1295.01px;top:209.90px;color:#2e2e2e;font-family:'Liberation Sans',sans-serif;font-size:18px;font-weight:400;font-style:normal;transform:scaleX(0.9946);">Format</span>
<span style="left:1474.40px;top:180.50px;color:#2e2e2e;font-family:'Liberation Sans',sans-serif;font-size:17.5px;font-weight:400;font-style:normal;transform:scaleX(1.0499);">Sort &amp;</span>
<span style="left:1472.24px;top:205.20px;color:#2e2e2e;font-family:'Liberation Sans',sans-serif;font-size:17.5px;font-weight:400;font-style:normal;transform:scaleX(0.9564);">Filter</span>
<span style="left:1541.75px;top:180.50px;color:#2e2e2e;font-family:'Liberation Sans',sans-serif;font-size:17.5px;font-weight:400;font-style:normal;transform:scaleX(1.0480);">Find &amp;</span>
<span style="left:1537.90px;top:205.20px;color:#2e2e2e;font-family:'Liberation Sans',sans-serif;font-size:17.5px;font-weight:400;font-style:normal;transform:scaleX(0.9205);">Select</span>
<span style="left:1631.30px;top:180.50px;color:#2e2e2e;font-family:'Liberation Sans',sans-serif;font-size:17.5px;font-weight:400;font-style:normal;transform:scaleX(1.0388);">Add-ins</span>
<span style="left:1725.50px;top:180.50px;color:#2e2e2e;font-family:'Liberation Sans',sans-serif;font-size:17.5px;font-weight:400;font-style:normal;transform:scaleX(0.9817);">Analyze</span>
<span style="left:1736.92px;top:205.20px;color:#2e2e2e;font-family:'Liberation Sans',sans-serif;font-size:17.5px;font-weight:400;font-style:normal;transform:scaleX(0.9825);">Data</span>
<span style="left:1479.00px;top:126.30px;color:#2c8fd6;font-family:'Liberation Sans',sans-serif;font-size:25px;font-weight:400;font-style:normal;transform:scaleX(0.8941);">A</span>
<span style="left:1479.40px;top:148.20px;color:#4a4a4a;font-family:'Liberation Sans',sans-serif;font-size:24px;font-weight:400;font-style:normal;transform:scaleX(0.9286);">Z</span>
<span style="left:19.20px;top:287.80px;color:#242424;font-family:'Liberation Sans',sans-serif;font-size:18px;font-weight:400;font-style:normal;transform:scaleX(1.0225);">A7</span>
<span style="left:274.80px;top:281.40px;color:#333;font-family:'Liberation Serif',serif;font-size:25px;font-weight:400;font-style:italic;transform:scaleX(1.1479);">fx</span>
<span style="left:326.70px;top:287.80px;color:#242424;font-family:'Liberation Sans',sans-serif;font-size:18px;font-weight:400;font-style:normal;transform:scaleX(1.0766);">2554</span>
<span style="left:179.13px;top:936.50px;color:#1b1b1b;font-family:'Liberation Sans',sans-serif;font-size:20px;font-weight:400;font-style:normal;transform:scaleX(0.9489);-webkit-text-stroke:0.7px #1b1b1b;">Sheet1</span>
<span style="left:15.40px;top:983.00px;color:#3a3a3a;font-family:'Liberation Sans',sans-serif;font-size:16.5px;font-weight:400;font-style:normal;transform:scaleX(0.8958);">Ready</span>
<span style="left:113.80px;top:983.00px;color:#3a3a3a;font-family:'Liberation Sans',sans-serif;font-size:16.5px;font-weight:400;font-style:normal;transform:scaleX(0.9319);">Accessibility: Good to go</span>
<span style="left:1869.58px;top:983.00px;color:#3a3a3a;font-family:'Liberation Sans',sans-serif;font-size:16.5px;font-weight:400;font-style:normal;transform:scaleX(0.9222);">100%</span>
</div>
<div class="lab" id="toplayer">

<span style="left:1498.80px;top:896.50px;color:rgba(168,168,168,.82);font-family:'Liberation Sans',sans-serif;font-size:29px;font-weight:400;font-style:normal;transform:scaleX(1.0256);">Activate Windows</span>
<span style="left:1497.79px;top:936.00px;color:rgba(170,170,170,.8);font-family:'Liberation Sans',sans-serif;font-size:21.5px;font-weight:400;font-style:normal;transform:scaleX(1.0127);">Go to Settings to activate Windows.</span>
</div>
</body></html>
